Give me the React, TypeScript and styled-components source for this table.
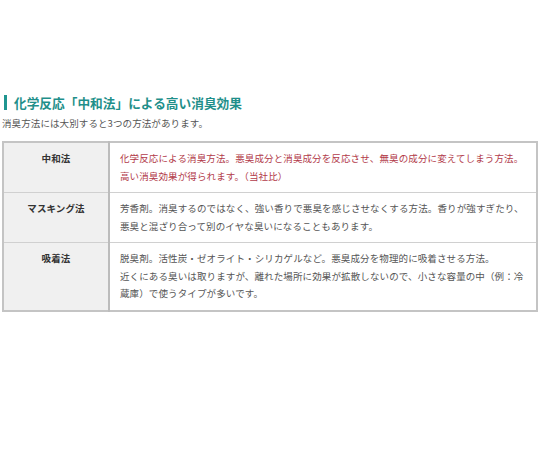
import * as React from 'react';
import styled, { createGlobalStyle } from 'styled-components';

const GlobalStyle = createGlobalStyle`
    html, body {
        margin: 0;
        padding: 0;
        background: #ffffff;
    }
    body {
        font-family: "Noto Sans CJK JP", "Noto Sans", sans-serif;
        color: #444444;
    }
`;

const Section = styled.section`
    padding: 94px 2px 0 2px;
`;

const Heading = styled.h2`
    display: flex;
    align-items: center;
    gap: 7px;
    margin: 0 0 4px 2px;
    font-size: 12.7px;
    line-height: 17px;
    font-weight: 700;
    color: #1f8f8a;

    &::before {
        content: '';
        display: block;
        width: 3px;
        height: 15px;
        background: #1f9590;
    }
`;

const Lead = styled.p`
    margin: 0 0 9px 0;
    font-size: 9.5px;
    line-height: 17px;
    letter-spacing: 0.1px;
    color: #555555;
`;

const Table = styled.table`
    width: 100%;
    border-collapse: collapse;
    border: 2px solid #c4c4c4;
    font-size: 9.5px;
    line-height: 17.5px;
    letter-spacing: 0.12px;
`;

const Label = styled.th`
    width: 84px;
    padding: 7px 10px;
    background: #f0f0f0;
    border: 1px solid #d0d0d0;
    border-right: 2px solid #bcbcbc;
    font-weight: 700;
    color: #333333;
    text-align: center;
    vertical-align: top;
`;

const Cell = styled.td<{ $accent?: boolean }>`
    padding: 7px 10px;
    border: 1px solid #d0d0d0;
    color: ${(props) => (props.$accent ? '#b23b4a' : '#555555')};
    vertical-align: top;
    line-break: strict;
`;

const rows = [
    {
        label: '中和法',
        accent: true,
        lines: ['化学反応による消臭方法。悪臭成分と消臭成分を反応させ、無臭の成分に変えてしまう方法。高い消臭効果が得られます。（当社比）'],
    },
    {
        label: 'マスキング法',
        accent: false,
        lines: ['芳香剤。消臭するのではなく、強い香りで悪臭を感じさせなくする方法。香りが強すぎたり、悪臭と混ざり合って別のイヤな臭いになることもあります。'],
    },
    {
        label: '吸着法',
        accent: false,
        lines: [
            '脱臭剤。活性炭・ゼオライト・シリカゲルなど。悪臭成分を物理的に吸着させる方法。',
            '近くにある臭いは取りますが、離れた場所に効果が拡散しないので、小さな容量の中（例：冷蔵庫）で使うタイプが多いです。',
        ],
    },
];

export default function App() {
    return (
        <>
            <GlobalStyle />
            <Section>
                <Heading>化学反応「中和法」による高い消臭効果</Heading>
                <Lead>消臭方法には大別すると3つの方法があります。</Lead>
                <Table>
                    <tbody>
                        {rows.map((row) => (
                            <tr key={row.label}>
                                <Label>{row.label}</Label>
                                <Cell $accent={row.accent}>
                                    {row.lines.map((line, i) => (
                                        <React.Fragment key={i}>
                                            {i > 0 && <br />}
                                            {line}
                                        </React.Fragment>
                                    ))}
                                </Cell>
                            </tr>
                        ))}
                    </tbody>
                </Table>
            </Section>
        </>
    );
}
